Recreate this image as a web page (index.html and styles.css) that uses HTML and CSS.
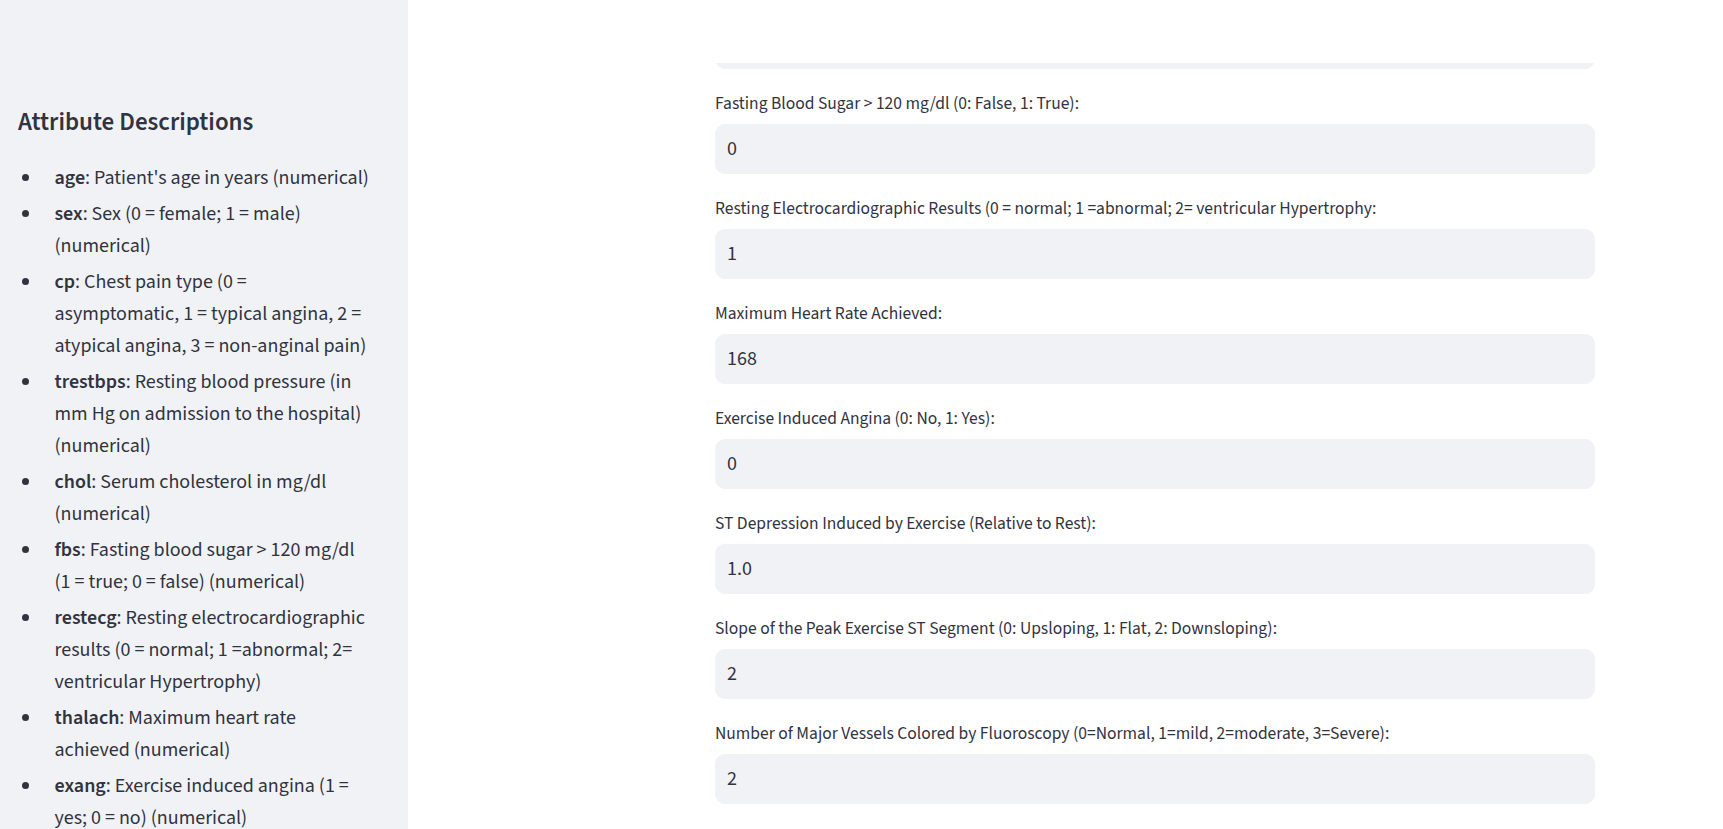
FILE: index.html
```html
<!DOCTYPE html>
<html lang="en">
<head>
<meta charset="utf-8">
<title>Heart Disease Prediction</title>
<link rel="stylesheet" href="styles.css">
</head>
<body>
<div class="app">
  <aside class="sidebar">
    <h3 class="side-title">Attribute Descriptions</h3>
    <ul class="attr-list">
      <li><span><strong>age</strong>: Patient's age in years (numerical)</span></li>
      <li><span><strong>sex</strong>: Sex (0 = female; 1 = male) (numerical)</span></li>
      <li><span><strong>cp</strong>: Chest pain type (0 = asymptomatic, 1 = typical angina, 2 = atypical angina, 3 = non-anginal pain)</span></li>
      <li><span><strong>trestbps</strong>: Resting blood pressure (in mm Hg on admission to the hospital) (numerical)</span></li>
      <li><span><strong>chol</strong>: Serum cholesterol in mg/dl (numerical)</span></li>
      <li><span><strong>fbs</strong>: Fasting blood sugar &gt; 120 mg/dl (1 = true; 0 = false) (numerical)</span></li>
      <li><span><strong>restecg</strong>: Resting electrocardiographic results (0 = normal; 1 =abnormal; 2= ventricular Hypertrophy)</span></li>
      <li><span><strong>thalach</strong>: Maximum heart rate achieved (numerical)</span></li>
      <li><span><strong>exang</strong>: Exercise induced angina (1 = yes; 0 = no) (numerical)</span></li>
      <li><span><strong>oldpeak</strong>: ST depression induced by exercise relative to rest (numerical)</span></li>
      <li><span><strong>slope</strong>: The slope of the peak exercise ST segment (numerical)</span></li>
    </ul>
  </aside>
  <main class="main">
    <header class="top-header"></header>
    <div class="form-col">
      <input class="field-input" type="text" value="130" readonly>
      <div class="field">
        <label class="field-label">Fasting Blood Sugar &gt; 120 mg/dl (0: False, 1: True):</label>
        <input class="field-input" type="text" value="0" readonly>
      </div>
      <div class="field">
        <label class="field-label">Resting Electrocardiographic Results (0 = normal; 1 =abnormal; 2= ventricular Hypertrophy:</label>
        <input class="field-input" type="text" value="1" readonly>
      </div>
      <div class="field">
        <label class="field-label">Maximum Heart Rate Achieved:</label>
        <input class="field-input" type="text" value="168" readonly>
      </div>
      <div class="field">
        <label class="field-label">Exercise Induced Angina (0: No, 1: Yes):</label>
        <input class="field-input" type="text" value="0" readonly>
      </div>
      <div class="field">
        <label class="field-label">ST Depression Induced by Exercise (Relative to Rest):</label>
        <input class="field-input" type="text" value="1.0" readonly>
      </div>
      <div class="field">
        <label class="field-label">Slope of the Peak Exercise ST Segment (0: Upsloping, 1: Flat, 2: Downsloping):</label>
        <input class="field-input" type="text" value="2" readonly>
      </div>
      <div class="field">
        <label class="field-label">Number of Major Vessels Colored by Fluoroscopy (0=Normal, 1=mild, 2=moderate, 3=Severe):</label>
        <input class="field-input" type="text" value="2" readonly>
      </div>
      <div class="field">
        <label class="field-label">Thalassemia (0 = normal; 1 = fixed defect; 2 = reversable defect):</label>
        <input class="field-input" type="text" value="2" readonly>
      </div>
    </div>
  </main>
</div>
</body>
</html>
```
FILE: styles.css
```css
html, body {
  margin: 0;
  padding: 0;
  height: 100%;
  overflow: hidden;
  background: #ffffff;
}

body {
  font-family: "Source Sans 3", "Lato", sans-serif;
  color: #31333f;
}

.app {
  display: flex;
  height: 100vh;
  overflow: hidden;
}

/* Sidebar */
.sidebar {
  width: 408px;
  flex-shrink: 0;
  box-sizing: border-box;
  background: #f0f2f6;
  padding: 107px 38px 0 18px;
  overflow: hidden;
}

.side-title {
  margin: 0 0 24.8px 0;
  font-size: 25px;
  font-weight: 600;
  line-height: 30px;
  color: #31333f;
}

.attr-list {
  list-style: none;
  margin: 0;
  padding: 0;
  font-size: 20px;
  line-height: 32px;
}

.attr-list li {
  display: flex;
  margin: 4px 0;
}

.attr-list li::before {
  content: "";
  flex-shrink: 0;
  width: 7px;
  height: 7px;
  border-radius: 50%;
  background: #31333f;
  margin: 12.5px 25.5px 0 4px;
}

.attr-list li span {
  flex: 1;
  min-width: 0;
}

.attr-list strong {
  font-weight: 600;
}

/* Main */
.main {
  flex: 1;
  min-width: 0;
  background: #ffffff;
}

.top-header {
  position: fixed;
  top: 0;
  left: 408px;
  right: 0;
  height: 63px;
  background: #ffffff;
  z-index: 5;
}

.form-col {
  display: flex;
  flex-direction: column;
  gap: 21px;
  width: 880px;
  margin-left: 307px;
  padding-top: 19px;
}

.field {
  display: flex;
  flex-direction: column;
}

.field-label {
  font-size: 17.5px;
  line-height: 28px;
  margin-bottom: 6px;
  color: #31333f;
}

.field-input {
  display: block;
  box-sizing: border-box;
  width: 100%;
  height: 50px;
  margin: 0;
  padding: 0 11px;
  border: 1px solid #f0f2f6;
  border-radius: 10px;
  background: #f0f2f6;
  font-family: inherit;
  font-size: 20px;
  color: #31333f;
  outline: none;
}
```
